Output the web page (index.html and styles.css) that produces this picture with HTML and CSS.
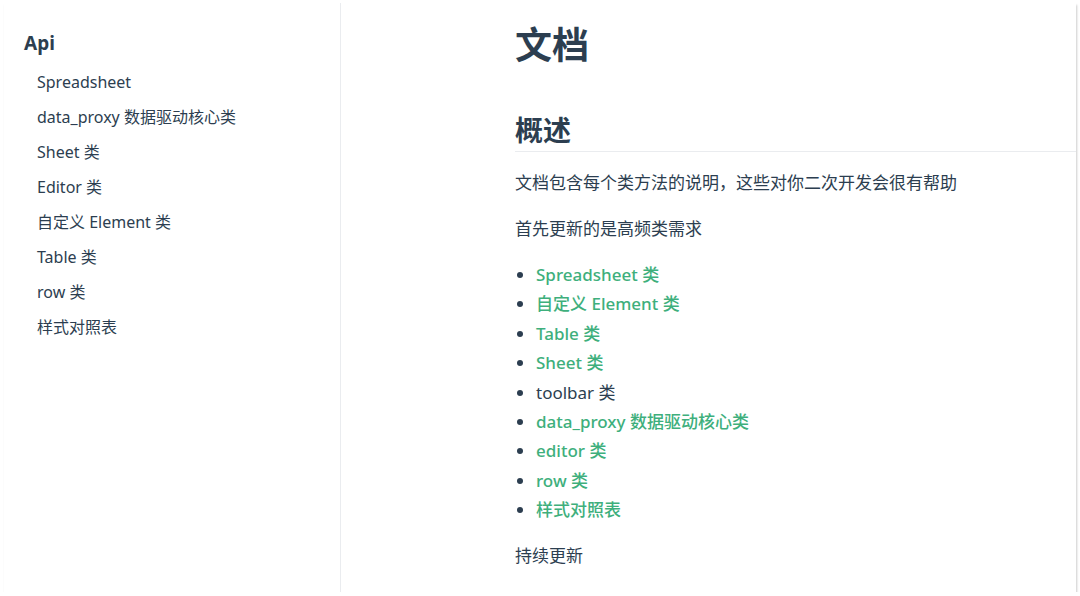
FILE: index.html
```html
<!DOCTYPE html>
<html lang="zh-CN">
<head>
    <meta charset="UTF-8">
    <meta name="viewport" content="width=device-width, initial-scale=1.0">
    <title>文档</title>
    <link rel="stylesheet" href="styles.css">
</head>
<body>
    <div class="frame">
        <aside class="sidebar">
            <p class="sidebar-heading">Api</p>
            <ul class="sidebar-links">
                <li><a href="#">Spreadsheet</a></li>
                <li><a href="#">data_proxy 数据驱动核心类</a></li>
                <li><a href="#">Sheet 类</a></li>
                <li><a href="#">Editor 类</a></li>
                <li><a href="#">自定义 Element 类</a></li>
                <li><a href="#">Table 类</a></li>
                <li><a href="#">row 类</a></li>
                <li><a href="#">样式对照表</a></li>
            </ul>
        </aside>

        <main class="page">
            <h1>文档</h1>
            <h2>概述</h2>
            <p>文档包含每个类方法的说明，这些对你二次开发会很有帮助</p>
            <p>首先更新的是高频类需求</p>
            <ul class="doc-list">
                <li><a href="#">Spreadsheet 类</a></li>
                <li><a href="#">自定义 Element 类</a></li>
                <li><a href="#">Table 类</a></li>
                <li><a href="#">Sheet 类</a></li>
                <li>toolbar 类</li>
                <li><a href="#">data_proxy 数据驱动核心类</a></li>
                <li><a href="#">editor 类</a></li>
                <li><a href="#">row 类</a></li>
                <li><a href="#">样式对照表</a></li>
            </ul>
            <p class="last">持续更新</p>
        </main>
    </div>
</body>
</html>
```

FILE: styles.css
```css
/* 文档页 */
html, body {
    margin: 0;
    padding: 0;
    background-color: #fff;
}
body {
    font-family: "Noto Sans", "Noto Sans CJK SC", sans-serif;
    font-size: 16px;
    color: #2c3e50;
    padding: 3px 4px 0 4px;
}
a {
    text-decoration: none;
}
.frame {
    display: flex;
    height: 589px;
    background-color: #fff;
    box-shadow: 1px 2px 2px rgba(0, 0, 0, 0.2);
    overflow: hidden;
}
.sidebar {
    width: 337px;
    flex-shrink: 0;
    border-right: 1px solid #eaecef;
    padding-top: 28px;
    box-sizing: border-box;
}
.sidebar-heading {
    margin: 0 0 10px 0;
    padding-left: 20px;
    font-size: 19px;
    font-weight: 700;
    line-height: 24px;
}
.sidebar-links {
    list-style: none;
    margin: 0;
    padding: 0;
}
.sidebar-links a {
    display: block;
    padding-left: 33px;
    line-height: 35px;
    color: #2c3e50;
    font-size: 16px;
}
.page {
    flex: 1;
    padding: 17px 0 0 174px;
    font-size: 17px;
}
h1 {
    margin: 0;
    font-size: 37px;
    line-height: 50px;
    font-weight: 700;
}
h2 {
    margin: 42px 0 0 0;
    font-size: 28px;
    line-height: 36px;
    font-weight: 700;
    padding-bottom: 3px;
    border-bottom: 1px solid #eaecef;
}
.page p {
    margin: 16px 0 0 0;
    line-height: 30px;
}
.doc-list {
    margin: 16px 0 0 0;
    padding-left: 21px;
}
.doc-list li {
    line-height: 29.4px;
}
.doc-list a {
    color: #3eaf7c;
    font-weight: 500;
}
```
